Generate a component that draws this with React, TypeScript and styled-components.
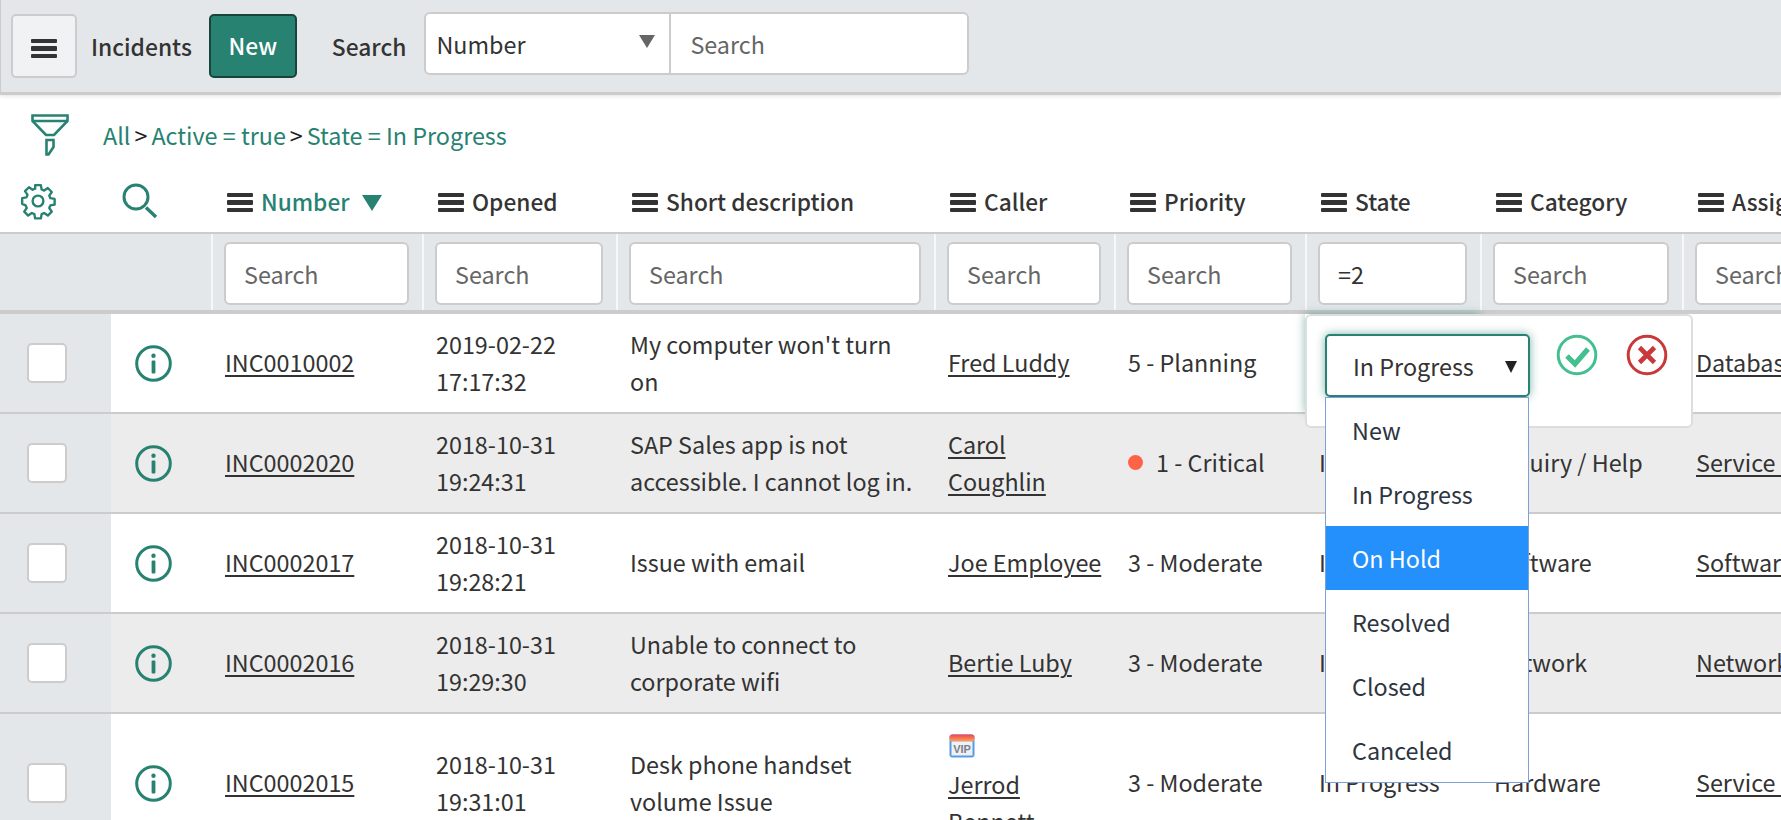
import React from "react";
import styled, { createGlobalStyle } from "styled-components";

const TEAL = "#278272";
const TEXT = "#333333";
const BORDER = "#cccccc";
const PANEL = "#e4e7ea";
const COLUMNS = "111px 100px 211px 194px 318px 180px 191px 175px 202px 300px";

const GlobalStyle = createGlobalStyle`
  html, body {
    margin: 0;
    height: 100%;
    overflow: hidden;
    background: #fff;
  }
  body {
    font-family: "Noto Sans CJK SC", "Open Sans", sans-serif;
    font-size: 23.35px;
    color: ${TEXT};
  }
  * { box-sizing: border-box; }
`;

const Page = styled.div`
  width: 1781px;
  height: 820px;
  overflow: hidden;
`;

const Toolbar = styled.header`
  display: flex;
  align-items: center;
  height: 95px;
  padding: 0 0 1px 10px;
  background: ${PANEL};
  border-left: 1px solid ${BORDER};
  border-bottom: 3px solid ${BORDER};
  box-shadow: 0 1px 4px rgba(0, 0, 0, 0.12);
`;

const MenuButton = styled.button`
  display: flex;
  align-items: center;
  justify-content: center;
  width: 66px;
  height: 64px;
  padding: 4px 0 0;
  background: #f0f2f4;
  border: 2px solid ${BORDER};
  border-radius: 5px;
`;

const ToolbarLabel = styled.span<{ $gap: number }>`
  margin-left: ${(p) => p.$gap}px;
  padding-top: 2px;
  font-size: 22.8px;
  font-weight: 500;
  line-height: 32px;
`;

const NewButton = styled.button`
  width: 88px;
  height: 64px;
  margin-left: 17px;
  background: ${TEAL};
  border: 2px solid #19443e;
  border-radius: 5px;
  color: #fff;
  font: 500 22.8px "Noto Sans CJK SC", "Open Sans", sans-serif;
`;

const SearchControl = styled.div`
  display: flex;
  width: 545px;
  height: 63px;
  margin: -4px 0 0 18px;
  background: #fff;
  border: 2px solid ${BORDER};
  border-radius: 6px;
`;

const SelectPart = styled.div`
  position: relative;
  display: flex;
  align-items: center;
  width: 245px;
  padding-left: 10px;
  border-right: 2px solid ${BORDER};
`;

const Caret = styled.i<{ $color: string; $w: number; $h: number; $right: number }>`
  position: absolute;
  right: ${(p) => p.$right}px;
  top: 50%;
  margin-top: -${(p) => p.$h / 2 + 2}px;
  border-style: solid;
  border-width: ${(p) => p.$h}px ${(p) => p.$w / 2}px 0;
  border-color: ${(p) => p.$color} transparent transparent;
`;

const EditCaret = styled(Caret)`
  margin-top: -5px;
`;

const SearchField = styled.input`
  flex: 1;
  min-width: 0;
  padding: 0 0 0 19px;
  border: 0;
  border-radius: 6px;
  background: transparent;
  outline: none;
  font: inherit;
  color: ${TEXT};
  &::placeholder { color: #666; opacity: 1; }
`;

const BreadcrumbRow = styled.nav`
  display: flex;
  align-items: center;
  height: 70px;
  padding: 9px 0 0 31px;
`;

const Crumbs = styled.div`
  margin-left: 34px;
  color: ${TEAL};
  line-height: 32px;
`;

const CrumbSep = styled.span`
  margin: 0 4px;
  color: #222;
`;

const HeaderRow = styled.div`
  display: grid;
  grid-template-columns: ${COLUMNS};
  height: 69px;
  border-bottom: 2px solid ${BORDER};
`;

const HeaderCell = styled.div<{ $active?: boolean }>`
  display: flex;
  align-items: center;
  gap: 8px;
  padding: 6px 0 0 16px;
  font-size: 22.7px;
  font-weight: 500;
  white-space: nowrap;
  color: ${(p) => (p.$active ? TEAL : "#343434")};
`;

const SortCaret = styled.i`
  margin: 2px 0 0 4px;
  border-style: solid;
  border-width: 16px 10px 0;
  border-color: ${TEAL} transparent transparent;
`;

const IconCell = styled.div<{ $left: number }>`
  display: flex;
  align-items: center;
  padding: 4px 0 0 ${(p) => p.$left}px;
`;

const Bars = styled.span`
  display: flex;
  flex-direction: column;
  justify-content: space-between;
  width: 26px;
  height: 20px;
  margin-top: 2px;
  & > b {
    display: block;
    height: 4.8px;
    background: #333;
    border-radius: 1px;
  }
`;

const FilterRow = styled.div`
  display: grid;
  grid-template-columns: 211px 211px 194px 318px 180px 191px 175px 202px 300px;
  height: 80px;
  background: ${PANEL};
  border-bottom: 4px solid ${BORDER};
`;

const FilterCell = styled.div<{ $plain?: boolean }>`
  padding: 8px 13px 0 11px;
  border-left: ${(p) => (p.$plain ? "0" : "2px solid #f6f7f8")};
`;

const FilterInput = styled.input`
  display: block;
  width: 100%;
  height: 63px;
  padding: 0 0 0 18px;
  background: #fff;
  border: 2px solid ${BORDER};
  border-radius: 6px;
  outline: none;
  font: inherit;
  color: ${TEXT};
  &::placeholder { color: #666; opacity: 1; }
`;

const Row = styled.div<{ $shaded?: boolean; $tall?: boolean }>`
  display: grid;
  grid-template-columns: ${COLUMNS};
  min-height: ${(p) => (p.$tall ? 140 : 100)}px;
  background: ${(p) => (p.$shaded ? "#ececec" : "#fff")};
  border-bottom: 2px solid ${BORDER};
  line-height: 36.7px;
`;

const CheckCell = styled.div`
  display: flex;
  align-items: center;
  padding-left: 27px;
  background: ${PANEL};
`;

const CheckBox = styled.span`
  display: block;
  width: 40px;
  height: 40px;
  background: #fff;
  border: 2px solid ${BORDER};
  border-radius: 5px;
`;

const InfoCell = styled.div`
  display: flex;
  align-items: center;
  padding-left: 24px;
`;

const Cell = styled.div<{ $focused?: boolean }>`
  position: relative;
  display: flex;
  align-items: center;
  padding: 0 12px 1px 14px;
  box-shadow: ${(p) => (p.$focused ? "0 0 9px rgba(39, 130, 114, 0.55)" : "none")};
`;

const CallerStack = styled.div`
  display: flex;
  flex-direction: column;
  align-items: flex-start;
`;

const VipBadge = styled.span`
  display: block;
  height: 24px;
  margin: 8px 0 8px 1px;
  line-height: 0;
`;

const RecordLink = styled.a`
  color: ${TEXT};
  text-decoration: underline;
  text-decoration-thickness: 2px;
  text-underline-offset: 3px;
`;

const Dot = styled.span`
  flex: none;
  width: 15px;
  height: 15px;
  margin-right: 13px;
  background: #ff6347;
  border-radius: 50%;
`;

const EditPopover = styled.div`
  position: absolute;
  z-index: 5;
  left: 0;
  top: 0;
  display: flex;
  width: 388px;
  height: 114px;
  padding: 18px 0 0 18px;
  background: #fff;
  border: 2px solid #ddd;
  border-radius: 6px;
  line-height: 32px;
`;

const EditSelect = styled.div`
  position: relative;
  display: flex;
  align-items: center;
  width: 205px;
  height: 63px;
  padding: 0 0 0 26px;
  background: #fff;
  border: 2px solid ${TEAL};
  border-radius: 5px;
  box-shadow: 0 0 10px rgba(39, 130, 114, 0.6);
`;

const OptionList = styled.ul`
  position: absolute;
  left: 18px;
  top: 81px;
  width: 204px;
  margin: 0;
  padding: 0;
  list-style: none;
  background: #fff;
  border: 1px solid #7e9fd8;
`;

const OptionItem = styled.li<{ $selected?: boolean }>`
  display: flex;
  align-items: center;
  height: 64px;
  padding-left: 26px;
  background: ${(p) => (p.$selected ? "#2490fc" : "transparent")};
  color: ${(p) => (p.$selected ? "#fff" : "#2c3540")};
`;

const ActionIcons = styled.div`
  display: flex;
  gap: 28px;
  margin: 0 0 0 26px;
  height: 42px;
`;

const GearIcon = () => (
  <svg width="38" height="38" viewBox="0 0 24 24" fill="none" stroke={TEAL} strokeWidth="1.5" strokeLinejoin="round">
    <path d="M10.2 2h3.6l.5 2.7 1.6.7 2.3-1.6 2.5 2.5-1.6 2.3.7 1.6 2.7.5v3.6l-2.7.5-.7 1.6 1.6 2.3-2.5 2.5-2.3-1.6-1.6.7-.5 2.7h-3.6l-.5-2.7-1.6-.7-2.3 1.6-2.5-2.5 1.6-2.3-.7-1.6L2 13.8v-3.6l2.7-.5.7-1.6-1.6-2.3 2.5-2.5 2.3 1.6 1.6-.7z" />
    <circle cx="12" cy="12" r="3.4" />
  </svg>
);

const LensIcon = () => (
  <svg width="36" height="36" viewBox="0 0 36 36" fill="none" stroke={TEAL} strokeWidth="3">
    <circle cx="14" cy="14" r="12" />
    <path d="M24 24.5 34 34" strokeWidth="3.4" />
  </svg>
);

const FunnelIcon = () => (
  <svg width="38" height="42" viewBox="0 0 38 42" fill="none" stroke={TEAL} strokeWidth="2.6">
    <path d="M1.5 1.5h35v5.5L23 21H15L1.5 7z" />
    <path d="M1.5 7h35" />
    <path d="M15.5 26h7v7l-5 7.5h-2z" />
  </svg>
);

const InfoIcon = () => (
  <svg width="37" height="37" viewBox="0 0 37 37" fill="none">
    <circle cx="18.5" cy="18.5" r="16.8" stroke={TEAL} strokeWidth="3" />
    <circle cx="18.5" cy="10.8" r="2.2" fill={TEAL} />
    <rect x="16.6" y="15.5" width="3.8" height="13" rx="1" fill={TEAL} />
  </svg>
);

const ApplyIcon = () => (
  <svg width="42" height="42" viewBox="0 0 42 42" fill="none">
    <circle cx="21" cy="21" r="18.8" stroke="#43bf90" strokeWidth="3" />
    <path d="M11 22l8 8 13-15" stroke="#43bf90" strokeWidth="5.2" />
  </svg>
);

const CancelIcon = () => (
  <svg width="42" height="42" viewBox="0 0 42 42" fill="none">
    <circle cx="21" cy="21" r="18.8" stroke="#c9393a" strokeWidth="3" />
    <path d="M13.5 13.5l15 15M28.5 13.5l-15 15" stroke="#c9393a" strokeWidth="4.6" />
  </svg>
);

const VipIcon = () => (
  <svg width="26" height="24" viewBox="0 0 26 24">
    <defs>
      <linearGradient id="vipTop" x1="0" y1="0" x2="0" y2="1">
        <stop offset="0" stopColor="#f0405a" />
        <stop offset="1" stopColor="#ffa64d" />
      </linearGradient>
    </defs>
    <rect x="0.5" y="0.5" width="25" height="23" rx="3" fill="#5b9be6" />
    <rect x="0.5" y="0.5" width="25" height="7" rx="3" fill="url(#vipTop)" />
    <rect x="2.5" y="7.5" width="21" height="14" fill="#eef1f5" />
    <text x="13" y="19" textAnchor="middle" fontSize="11" fontWeight="700" fontFamily="Liberation Sans, sans-serif" fill="#7b8088">VIP</text>
  </svg>
);

const HeaderLabel = ({ label, active }: { label: string; active?: boolean }) => (
  <HeaderCell $active={active}>
    <Bars><b /><b /><b /></Bars>
    <span>{label}</span>
    {active && <SortCaret />}
  </HeaderCell>
);

interface Incident {
  number: string;
  opened: string[];
  description: string;
  caller: string;
  priority: string;
  category: string;
  group: string;
  critical?: boolean;
  vip?: boolean;
  shaded?: boolean;
  editing?: boolean;
}

const incidents: Incident[] = [
  { number: "INC0010002", opened: ["2019-02-22", "17:17:32"], description: "My computer won't turn on", caller: "Fred Luddy", priority: "5 - Planning", category: "Database", group: "Database", editing: true },
  { number: "INC0002020", opened: ["2018-10-31", "19:24:31"], description: "SAP Sales app is not accessible. I cannot log in.", caller: "Carol Coughlin", priority: "1 - Critical", category: "Inquiry / Help", group: "Service Desk", critical: true, shaded: true },
  { number: "INC0002017", opened: ["2018-10-31", "19:28:21"], description: "Issue with email", caller: "Joe Employee", priority: "3 - Moderate", category: "Software", group: "Software" },
  { number: "INC0002016", opened: ["2018-10-31", "19:29:30"], description: "Unable to connect to corporate wifi", caller: "Bertie Luby", priority: "3 - Moderate", category: "Network", group: "Network", shaded: true },
  { number: "INC0002015", opened: ["2018-10-31", "19:31:01"], description: "Desk phone handset volume Issue", caller: "Jerrod Bennett", priority: "3 - Moderate", category: "Hardware", group: "Service Desk", vip: true },
];

const stateOptions = ["New", "In Progress", "On Hold", "Resolved", "Closed", "Canceled"];
const headers = ["Opened", "Short description", "Caller", "Priority", "State", "Category", "Assignment group"];

const StateEditor = () => (
  <EditPopover>
    <EditSelect>
      In Progress
      <EditCaret $color="#222" $w={12} $h={12} $right={11} />
    </EditSelect>
    <ActionIcons>
      <ApplyIcon />
      <CancelIcon />
    </ActionIcons>
    <OptionList>
      {stateOptions.map((option) => (
        <OptionItem key={option} $selected={option === "On Hold"}>{option}</OptionItem>
      ))}
    </OptionList>
  </EditPopover>
);

export default function App() {
  return (
    <Page>
      <GlobalStyle />
      <Toolbar>
        <MenuButton aria-label="Menu"><Bars><b /><b /><b /></Bars></MenuButton>
        <ToolbarLabel $gap={14}>Incidents</ToolbarLabel>
        <NewButton>New</NewButton>
        <ToolbarLabel $gap={35}>Search</ToolbarLabel>
        <SearchControl>
          <SelectPart>
            Number
            <Caret $color="#666" $w={16} $h={13} $right={14} />
          </SelectPart>
          <SearchField placeholder="Search" />
        </SearchControl>
      </Toolbar>

      <BreadcrumbRow>
        <FunnelIcon />
        <Crumbs>
          All<CrumbSep>&gt;</CrumbSep>Active = true<CrumbSep>&gt;</CrumbSep>State = In Progress
        </Crumbs>
      </BreadcrumbRow>

      <HeaderRow>
        <IconCell $left={19}><GearIcon /></IconCell>
        <IconCell $left={11}><LensIcon /></IconCell>
        <HeaderLabel label="Number" active />
        {headers.map((label) => <HeaderLabel key={label} label={label} />)}
      </HeaderRow>

      <FilterRow>
        <FilterCell $plain />
        <FilterCell><FilterInput placeholder="Search" /></FilterCell>
        <FilterCell><FilterInput placeholder="Search" /></FilterCell>
        <FilterCell><FilterInput placeholder="Search" /></FilterCell>
        <FilterCell><FilterInput placeholder="Search" /></FilterCell>
        <FilterCell><FilterInput placeholder="Search" /></FilterCell>
        <FilterCell><FilterInput defaultValue="=2" /></FilterCell>
        <FilterCell><FilterInput placeholder="Search" /></FilterCell>
        <FilterCell><FilterInput placeholder="Search" /></FilterCell>
      </FilterRow>

      {incidents.map((item) => (
        <Row key={item.number} $shaded={item.shaded} $tall={item.vip}>
          <CheckCell><CheckBox /></CheckCell>
          <InfoCell><InfoIcon /></InfoCell>
          <Cell><RecordLink>{item.number}</RecordLink></Cell>
          <Cell><span>{item.opened[0]}<br />{item.opened[1]}</span></Cell>
          <Cell><span>{item.description}</span></Cell>
          <Cell>
            <CallerStack>
              {item.vip && <VipBadge><VipIcon /></VipBadge>}
              <RecordLink>{item.caller}</RecordLink>
            </CallerStack>
          </Cell>
          <Cell>
            {item.critical && <Dot />}
            {item.priority}
          </Cell>
          <Cell $focused={item.editing}>
            In Progress
            {item.editing && <StateEditor />}
          </Cell>
          <Cell>{item.category}</Cell>
          <Cell><RecordLink>{item.group}</RecordLink></Cell>
        </Row>
      ))}
    </Page>
  );
}
